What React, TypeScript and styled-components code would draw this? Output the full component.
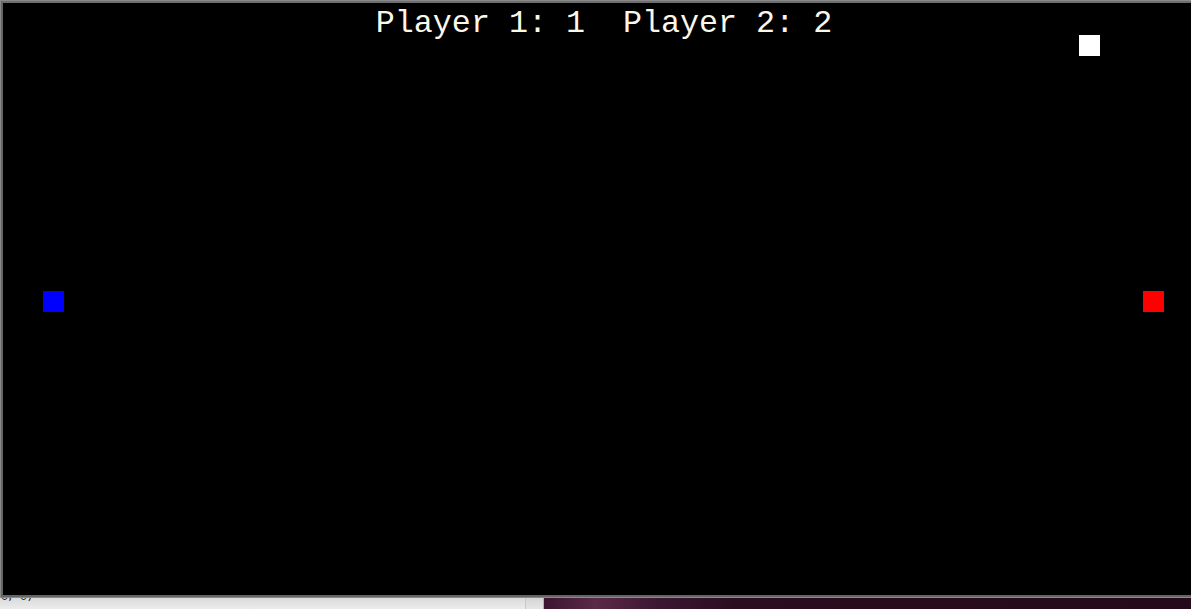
import React from "react";
import styled, { createGlobalStyle } from "styled-components";

const Global = createGlobalStyle`
  html, body { margin: 0; padding: 0; background: #230a19; overflow: hidden; }
  #root { width: 1191px; height: 609px; overflow: hidden; }
`;

const Screen = styled.div`
  width: 1191px;
  height: 609px;
  overflow: hidden;
  display: flex;
  flex-direction: column;
  background: #230a19;
`;

const GameWindow = styled.div`
  width: 1200px;
  flex: none;
  border: 3px solid #646464;
  border-top-color: #6e6e6e;
  background: #000;
  outline: 1px solid #8a8a8a;
  outline-offset: -1px;
  box-sizing: content-box;
`;

const Canvas = styled.div`
  position: relative;
  width: 1200px;
  height: 592px;
  background: #000;
`;

const Score = styled.div`
  display: flex;
  justify-content: center;
  font-family: "Liberation Mono", "Courier New", monospace;
  font-size: 31.7px;
  line-height: 36px;
  color: #fbf8ea;
  white-space: pre;
  padding-top: 3px;
  padding-left: 2px;
`;

const Block = styled.div<{ $color: string }>`
  position: absolute;
  width: 21px;
  height: 21px;
  background: ${(p) => p.$color};
`;

const StatusRow = styled.div`
  flex: 1;
  display: flex;
  min-height: 0;
`;

const StatusBar = styled.div`
  width: 525px;
  flex: none;
  background: linear-gradient(#dadada, #ececec);
  border-right: 1px solid #c8c8c8;
  overflow: hidden;
`;

const StatusText = styled.div`
  font-family: "DejaVu Sans", "Liberation Sans", sans-serif;
  font-size: 12px;
  line-height: 12px;
  color: #1a1a1a;
  margin-top: -8px;
  margin-left: -4px;
  white-space: pre;
`;

const StatusGrip = styled.div`
  width: 17px;
  flex: none;
  background: linear-gradient(#d4d4d4, #e6e6e6);
  border-right: 1px solid #b0b0b0;
`;

const Wallpaper = styled.div`
  flex: 1;
  background: linear-gradient(100deg, #3a1430 0%, #5a2a48 8%, #3b1632 18%, #2a0d20 30%, #240a1a 100%);
`;

export default function App() {
  return (
    <Screen>
      <Global />
      <GameWindow>
        <Canvas>
          <Score>{"Player 1: 1  Player 2: 2"}</Score>
          <Block $color="#0000ff" style={{ left: 40, top: 288 }} />
          <Block $color="#ff0000" style={{ left: 1140, top: 288 }} />
          <Block $color="#ffffff" style={{ left: 1076, top: 32 }} />
        </Canvas>
      </GameWindow>
      <StatusRow>
        <StatusBar>
          <StatusText>{"(0,  0)"}</StatusText>
        </StatusBar>
        <StatusGrip />
        <Wallpaper />
      </StatusRow>
    </Screen>
  );
}
